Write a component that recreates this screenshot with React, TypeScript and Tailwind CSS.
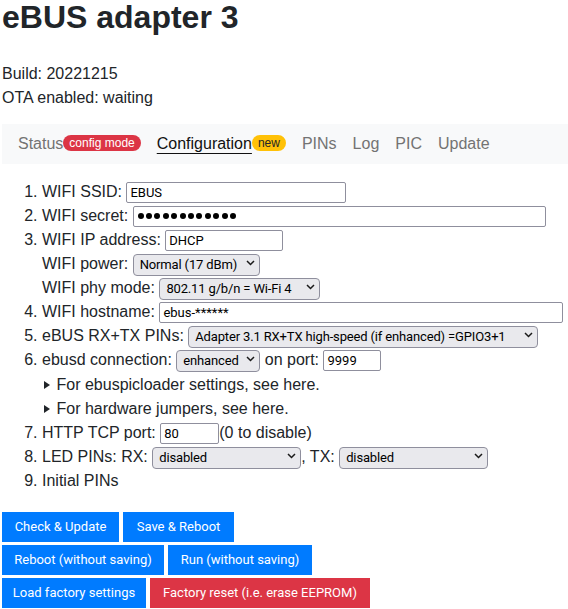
import React from "react";

const Marker = ({ n }: { n?: string }) => (
  <span className="w-[40px] shrink-0 text-right pr-[4.45px]">{n ?? ""}</span>
);

const Row = ({
  n,
  h = "h-[24px]",
  children,
}: {
  n?: string;
  h?: string;
  children: React.ReactNode;
}) => (
  <div className={`flex items-center ${h} leading-[24px] whitespace-pre`}>
    <Marker n={n} />
    {children}
  </div>
);

const Input = ({ w, value }: { w: string; value: string }) => (
  <input
    readOnly
    value={value}
    className={`${w} h-[21px] shrink-0 border border-[#8f8f9d] rounded-[2px] bg-white px-[3px] text-[13px] leading-[19px] text-black font-['Roboto',sans-serif] outline-none`}
  />
);

const Select = ({ w, text }: { w: string; text: string }) => (
  <span className={`relative inline-block shrink-0 ${w}`}>
    <select className="appearance-none w-full h-[22px] rounded-[4px] border border-[#8f8f9d] bg-[#e9e9ed] pl-[6px] pr-[18px] text-[13px] tracking-[-0.15px] leading-[20px] text-black font-['Roboto',sans-serif] outline-none">
      <option>{text}</option>
    </select>
    <svg
      className="absolute right-[5px] top-[8px] pointer-events-none"
      width="9"
      height="6"
      viewBox="0 0 9 6"
    >
      <path d="M1 1 L4.5 4.5 L8 1" stroke="#1a1a1a" strokeWidth="1.5" fill="none" />
    </svg>
  </span>
);

const Btn = ({
  w,
  red,
  children,
}: {
  w: string;
  red?: boolean;
  children: React.ReactNode;
}) => (
  <button
    className={`${w} h-[30px] ${red ? "bg-[#dc3545]" : "bg-[#007bff]"} text-white text-[13px] font-['Roboto',sans-serif] flex items-center justify-center`}
  >
    {children}
  </button>
);

const Triangle = () => (
  <svg width="6" height="8" viewBox="0 0 6 8" className="ml-[1.5px] mr-[7px]">
    <path d="M0 0 L6 4 L0 8 Z" fill="#212529" />
  </svg>
);

export default function App() {
  return (
    <div className="pl-[2px] bg-white text-[#212529] text-[16px] font-['Liberation_Sans',Arial,sans-serif] min-h-[609px]">
      <h1 className="text-[32px] leading-[34px] font-bold">eBUS adapter 3</h1>
      <div className="mt-[28px] leading-[24px]">
        <div>Build: 20221215</div>
        <div>OTA enabled: waiting</div>
      </div>

      <nav className="mt-[14px] h-[40px] bg-[#f8f9fa] flex items-center px-[8px] leading-[24px]">
        <span className="flex items-center px-[8px] text-[#737373]">
          Status
          <span className="h-[16px] rounded-full bg-[#dc3545] text-white text-[12px] leading-[16px] px-[6px] -mt-[2px]">
            config mode
          </span>
        </span>
        <span className="flex items-center px-[8px] text-[#111]">
          <span className="underline underline-offset-[4px] decoration-1">Configuration</span>
          <span className="h-[16px] rounded-full bg-[#ffc107] text-[#212529] text-[12px] leading-[16px] px-[6px] -mt-[2px]">
            new
          </span>
        </span>
        <span className="px-[8px] text-[#737373]">PINs</span>
        <span className="px-[8px] text-[#737373]">Log</span>
        <span className="px-[8px] text-[#737373]">PIC</span>
        <span className="px-[8px] text-[#737373]">Update</span>
      </nav>

      <div className="mt-[16px]">
        <Row n="1.">
          <span>{"WIFI SSID: "}</span>
          <Input w="w-[220px]" value="EBUS" />
        </Row>
        <Row n="2.">
          <span>{"WIFI secret: "}</span>
          <span className="w-[413px] h-[21px] shrink-0 border border-[#8f8f9d] rounded-[2px] bg-white pl-[4px] flex items-center gap-[2.4px]">
            {Array.from({ length: 12 }).map((_, i) => (
              <span key={i} className="w-[6px] h-[6px] rounded-full bg-black" />
            ))}
          </span>
        </Row>
        <Row n="3.">
          <span>{"WIFI IP address: "}</span>
          <Input w="w-[118px]" value="DHCP" />
        </Row>
        <Row>
          <span>{"WIFI power: "}</span>
          <Select w="w-[127px]" text="Normal (17 dBm)" />
        </Row>
        <Row>
          <span>{"WIFI phy mode: "}</span>
          <Select w="w-[161px]" text="802.11 g/b/n = Wi-Fi 4" />
        </Row>
        <Row n="4.">
          <span>{"WIFI hostname: "}</span>
          <Input w="w-[404px]" value="ebus-******" />
        </Row>
        <Row n="5.">
          <span>{"eBUS RX+TX PINs: "}</span>
          <Select w="w-[350px]" text="Adapter 3.1 RX+TX high-speed (if enhanced) =GPIO3+1" />
        </Row>
        <Row n="6.">
          <span>{"ebusd connection: "}</span>
          <Select w="w-[84px]" text="enhanced" />
          <span>{" on port: "}</span>
          <Input w="w-[58px]" value="9999" />
        </Row>
        <Row h="h-[25px]">
          <Triangle />
          <span>For ebuspicloader settings, see here.</span>
        </Row>
        <Row>
          <Triangle />
          <span>For hardware jumpers, see here.</span>
        </Row>
        <Row n="7.">
          <span>{"HTTP TCP port: "}</span>
          <Input w="w-[59px]" value="80" />
          <span>(0 to disable)</span>
        </Row>
        <Row n="8.">
          <span>{"LED PINs: RX: "}</span>
          <Select w="w-[149px]" text="disabled" />
          <span>{", TX: "}</span>
          <Select w="w-[149px]" text="disabled" />
        </Row>
        <Row n="9.">
          <span>Initial PINs</span>
        </Row>
      </div>

      <div className="mt-[19px] flex flex-col gap-[3px]">
        <div className="flex gap-[4px]">
          <Btn w="w-[117px]">Check &amp; Update</Btn>
          <Btn w="w-[111px]">Save &amp; Reboot</Btn>
        </div>
        <div className="flex gap-[4px]">
          <Btn w="w-[162px]">Reboot (without saving)</Btn>
          <Btn w="w-[144px]">Run (without saving)</Btn>
        </div>
        <div className="flex gap-[4px]">
          <Btn w="w-[144px]">Load factory settings</Btn>
          <Btn w="w-[220px]" red>
            Factory reset (i.e. erase EEPROM)
          </Btn>
        </div>
      </div>
    </div>
  );
}
